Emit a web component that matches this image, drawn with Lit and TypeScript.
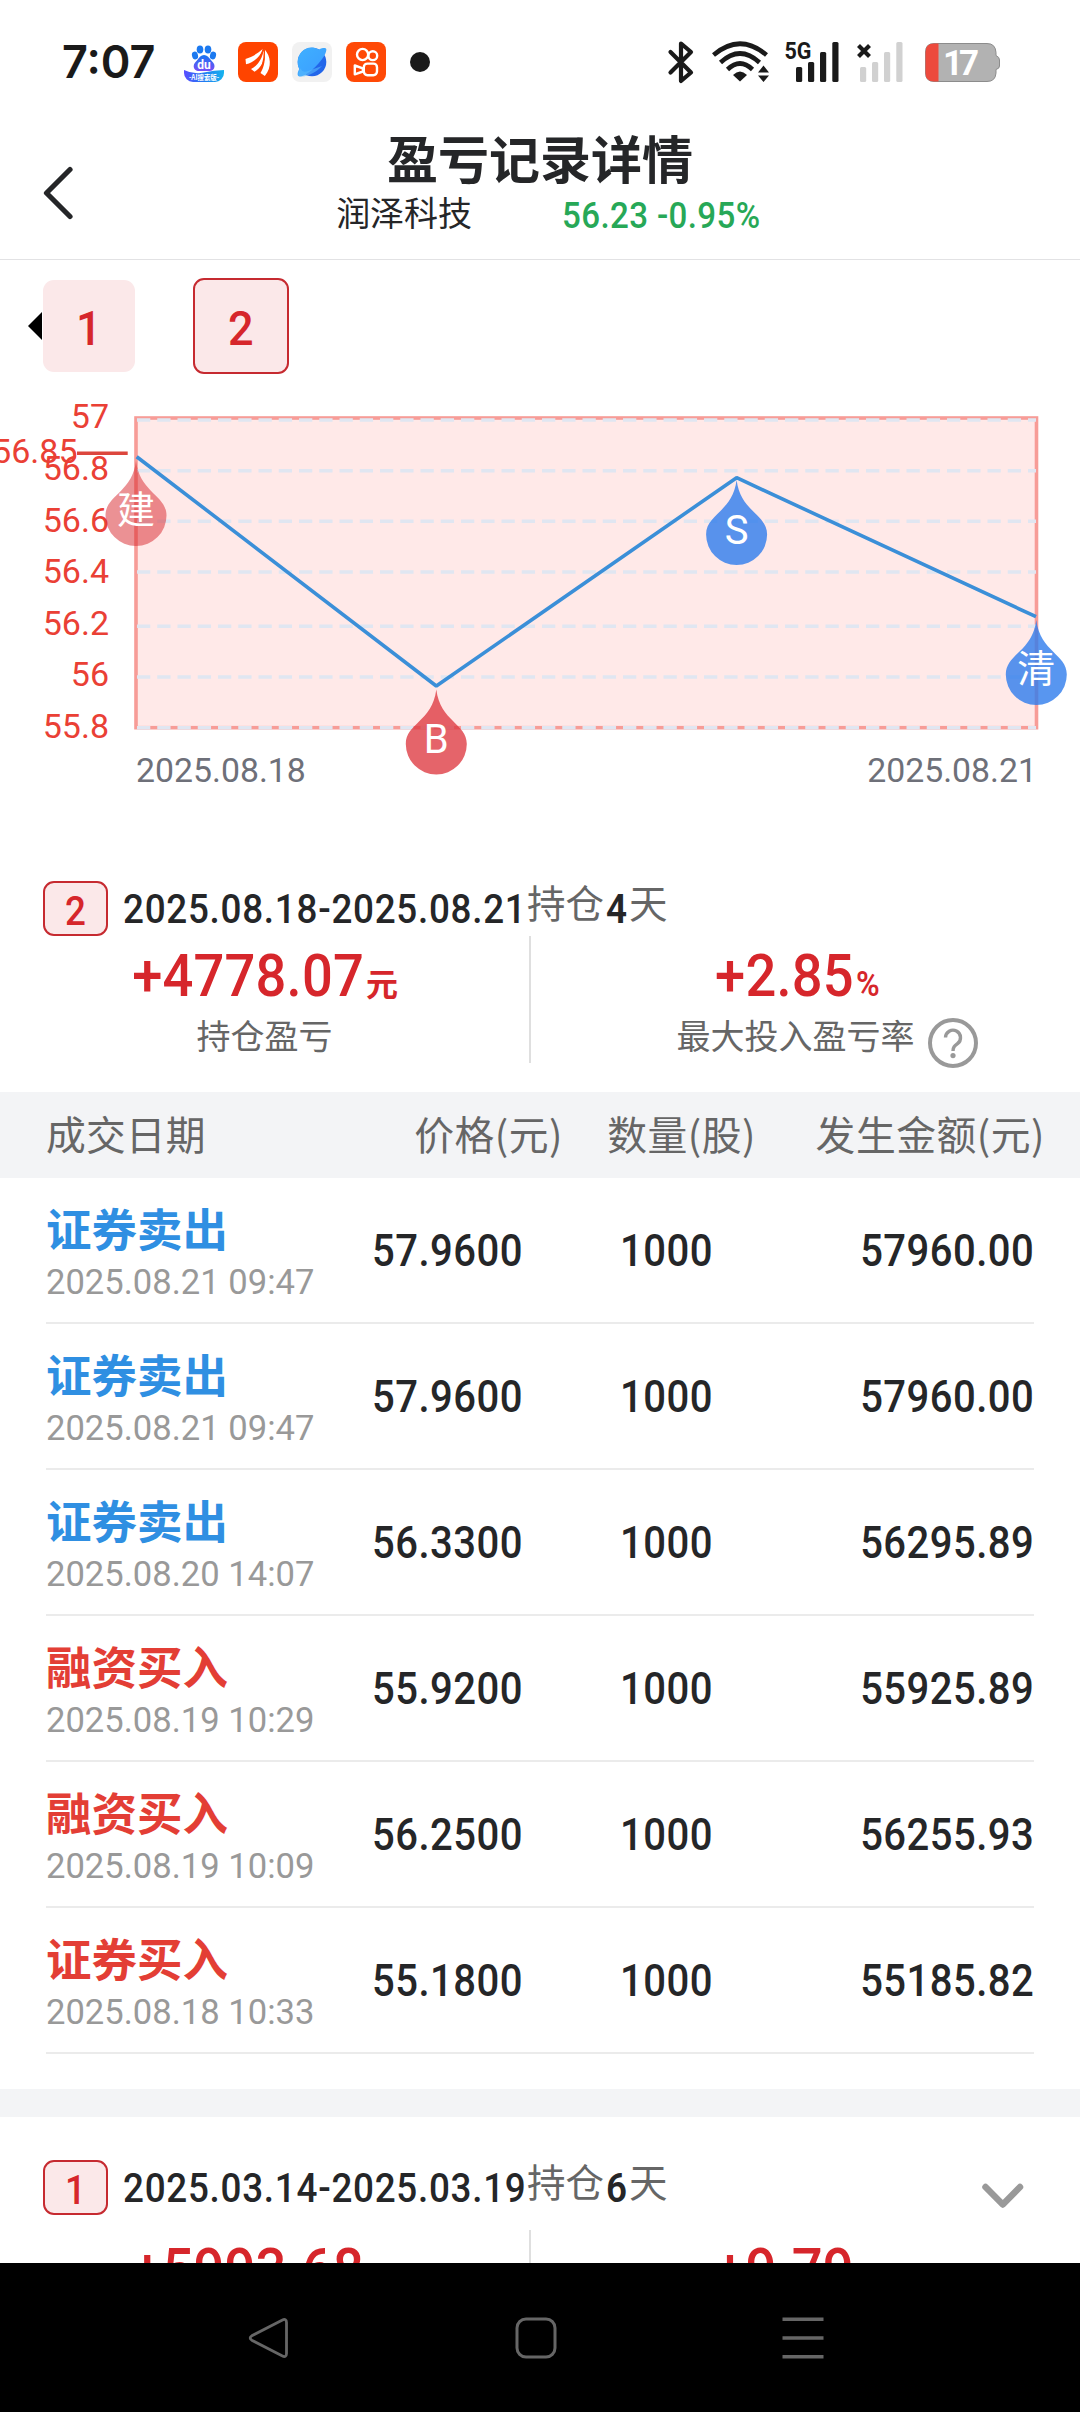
import { LitElement, html, svg, css } from "lit";
import { customElement, property } from "lit/decorators.js";

interface Trade {
  side: "sell" | "buy";
  name: string;
  time: string;
  price: string;
  qty: string;
  amount: string;
}

const TRADES: Trade[] = [
  { side: "sell", name: "证券卖出", time: "2025.08.21 09:47", price: "57.9600", qty: "1000", amount: "57960.00" },
  { side: "sell", name: "证券卖出", time: "2025.08.21 09:47", price: "57.9600", qty: "1000", amount: "57960.00" },
  { side: "sell", name: "证券卖出", time: "2025.08.20 14:07", price: "56.3300", qty: "1000", amount: "56295.89" },
  { side: "buy", name: "融资买入", time: "2025.08.19 10:29", price: "55.9200", qty: "1000", amount: "55925.89" },
  { side: "buy", name: "融资买入", time: "2025.08.19 10:09", price: "56.2500", qty: "1000", amount: "56255.93" },
  { side: "buy", name: "证券买入", time: "2025.08.18 10:33", price: "55.1800", qty: "1000", amount: "55185.82" },
];

const FONT = css`
  :host {
    display: block;
    font-family: Roboto, "Noto Sans CJK SC", sans-serif;
  }
  * {
    box-sizing: border-box;
  }
  svg {
    display: block;
    flex: none;
  }
  .din {
    display: inline-block;
    transform: scaleX(0.92);
    transform-origin: center;
  }
  .din.l {
    transform-origin: left;
  }
  .din.r {
    transform-origin: right;
  }
`;

@customElement("status-bar")
class StatusBar extends LitElement {
  static styles = [
    FONT,
    css`
      .bar {
        height: 124px;
        padding: 0 80px 0 62px;
        display: flex;
        align-items: center;
        justify-content: space-between;
      }
      .group {
        display: flex;
        align-items: center;
      }
      .time {
        width: 122px;
        font: 600 45px/60px Inter, sans-serif;
        color: #1a1a1a;
      }
      .apps {
        display: flex;
        gap: 14px;
      }
      .dot {
        width: 20px;
        height: 20px;
        margin-left: 24px;
        border-radius: 50%;
        background: #1a1a1a;
      }
      .t {
        font-family: Roboto, sans-serif;
        font-weight: 700;
      }
      .cjk {
        font-family: "Noto Sans CJK SC", sans-serif;
        font-weight: 700;
      }
    `,
  ];
  render() {
    return html`<div class="bar">
      <div class="group">
        <div class="time">7:07</div>
        <div class="apps">
          <svg width="40" height="40" viewBox="0 0 40 40">
            <defs>
              <linearGradient id="a" x1="0" y1="0" x2="1" y2="0">
                <stop offset="0" stop-color="#5a4dff" /><stop offset=".5" stop-color="#1f7bf2" /><stop offset="1" stop-color="#16b4ee" />
              </linearGradient>
              <linearGradient id="b" x1="0" y1="0" x2="0" y2="1">
                <stop offset="0" stop-color="#1676f3" /><stop offset="1" stop-color="#7a4df5" />
              </linearGradient>
            </defs>
            <ellipse cx="16" cy="7.500" rx="3.300" ry="4" fill="#1b79f0" />
            <ellipse cx="24" cy="7.500" rx="3.300" ry="4" fill="#1b79f0" />
            <ellipse cx="11" cy="13.500" rx="3" ry="4" fill="#1b79f0" transform="rotate(-15 11 13.500)" />
            <ellipse cx="29" cy="13.500" rx="3" ry="4" fill="#1b79f0" transform="rotate(15 29 13.500)" />
            <path d="M20 13c3 0 5 2.500 6.500 4.500 2 2.300 4 4 4 6.500 0 4-3 5-5.500 5H15c-3 0-5.300-1.500-5.300-5 0-2.500 2-4.200 4-6.500C15.200 15.500 17 13 20 13z" fill="url(#b)" />
            <path d="M0 28q10 5 20 2.500T40 28v3a9 9 0 0 1-9 9H9a9 9 0 0 1-9-9z" fill="url(#a)" />
            <text x="20" y="27" class="t" font-size="12" fill="#fff" text-anchor="middle">du</text>
            <text x="20" y="38.200" class="cjk" font-size="7.200" fill="#fff" text-anchor="middle" textLength="30" lengthAdjust="spacingAndGlyphs">-AI搜索版-</text>
          </svg>
          <svg width="40" height="40" viewBox="0 0 40 40">
            <rect width="40" height="40" rx="8" fill="#ff4400" />
            <g fill="#fff">
              <path d="M7.500 17C14 15 20 11.500 25 6.800 22.500 14 17 20 8 22.300z" />
              <path d="M13 27c6.500-3.200 11.500-10 12.800-20 2 9.500-1.800 18.500-9.300 22.800z" />
              <path d="M22.500 31c4-6.500 5-14 4.200-23.500C32.500 14 34.500 25 26.800 34z" />
            </g>
            <path d="M10.500 24.800C18 21 23.500 14 25.500 7M19.500 31c5-5.500 7.200-14 6.800-23.500" stroke="#ff4400" stroke-width="1.300" fill="none" />
          </svg>
          <svg width="40" height="40" viewBox="0 0 40 40">
            <defs>
              <linearGradient id="c" x1="0" y1="0" x2="1" y2="1">
                <stop offset="0" stop-color="#3fb0ff" /><stop offset="1" stop-color="#3b9cff" />
              </linearGradient>
            </defs>
            <rect width="40" height="40" rx="8" fill="#f1f1f1" />
            <circle cx="20" cy="20" r="14.300" fill="#2266ea" />
            <path d="M27 7.500C16 1.500 5.700 9.500 5.700 20c0 3 .6 5.300 1.500 7-2 4-2.300 7.300.5 7.500 5.500.3 18-10 24.500-20.500C34.500 9.500 35 6.500 33.500 6.200 32 5.800 29.500 6.300 27 7.500z" fill="url(#c)" />
            <path d="M30 24C24.500 30 15 35.500 8 34.300c-2-.7-2-3.500.5-8C10 30 13 30.500 16 29z" fill="#58b9fb" opacity=".6" />
          </svg>
          <svg width="40" height="40" viewBox="0 0 40 40">
            <rect width="40" height="40" rx="8" fill="#ff4906" />
            <g fill="none" stroke="#fff" stroke-width="2.400">
              <circle cx="16.600" cy="12.500" r="5.600" />
              <circle cx="26.800" cy="13.700" r="4.400" />
              <rect x="17.800" y="21.600" width="13.200" height="11.600" rx="3.600" />
              <path d="M8.800 23.500v8.800l8-2.800v-3.200z" stroke-linejoin="round" />
            </g>
          </svg>
        </div>
        <div class="dot"></div>
      </div>
      <svg width="336" height="44" viewBox="664 40 336 44">
        <path d="M670.500 52 691 72.500 681 81V43.500L691 52 670.500 72.500" fill="none" stroke="#1a1a1a" stroke-width="4.200" stroke-linecap="round" stroke-linejoin="round" />
        <g fill="none" stroke="#1a1a1a" stroke-width="4.600">
          <path d="M713.500 55Q740 32.500 766.500 55" />
          <path d="M720.500 62.500Q740 44.500 759.500 62.500" />
          <path d="M727.500 69.500Q740 57.500 752.500 69.500" />
        </g>
        <path d="M740 81.500 733 75Q740 68 747 75z" fill="#1a1a1a" />
        <path d="M763.500 65.500 769 72.500H758zM763.500 82 769 75.500H758z" fill="#1a1a1a" />
        <text x="784.500" y="59" class="t" font-size="24.500" fill="#1a1a1a" textLength="27" lengthAdjust="spacingAndGlyphs">5G</text>
        <g fill="#1a1a1a">
          <rect x="796" y="67" width="6.200" height="15" rx="1.500" />
          <rect x="808" y="62" width="6.200" height="20" rx="1.500" />
          <rect x="820" y="52" width="6.200" height="30" rx="1.500" />
          <rect x="832.300" y="42" width="6.200" height="40" rx="1.500" />
        </g>
        <path d="M858.500 45.500 869.500 56.500M869.500 45.500 858.500 56.500" stroke="#1a1a1a" stroke-width="4.200" />
        <g fill="#d1d1d1">
          <rect x="860" y="67" width="6.200" height="15" rx="1.500" />
          <rect x="872" y="62" width="6.200" height="20" rx="1.500" />
          <rect x="884" y="52" width="6.200" height="30" rx="1.500" />
          <rect x="896.300" y="42" width="6.200" height="40" rx="1.500" />
        </g>
        <path d="M934 43.500H987Q995.500 43.500 996 52.500V55.500Q999.500 57 999.500 60V66Q999.500 68.500 996 69.500V73Q995.500 81.500 987 81.500H934Q925.500 81.500 925.500 73V52Q925.500 43.500 934 43.500z" fill="#b2b2b2" stroke="#8c8c8c" />
        <path d="M938.500 43.500H934Q925.500 43.500 925.500 52V73Q925.500 81.500 934 81.500H938.500z" fill="#ed4a3d" />
        <text x="961" y="75" class="t" font-size="35" fill="#fff" text-anchor="middle" textLength="36">17</text>
      </svg>
    </div>`;
  }
}

@customElement("page-header")
class PageHeader extends LitElement {
  static styles = [
    FONT,
    css`
      .head {
        height: 136px;
        display: grid;
        grid-template-columns: 110px 1fr 110px;
        border-bottom: 1px solid #e2e2e4;
        color: #252628;
      }
      .back {
        padding: 42px 0 0 43px;
      }
      .title {
        margin-top: 12px;
        height: 52px;
        font-size: 51px;
        line-height: 52px;
        font-weight: 700;
        text-align: center;
      }
      .sub {
        display: flex;
        justify-content: center;
        gap: 90px;
        padding-left: 34px;
        font-size: 34px;
        line-height: 52px;
      }
      .quote {
        font-size: 36px;
        line-height: 57px;
        font-weight: 500;
        letter-spacing: 0.4px;
        color: #27a857;
        white-space: pre;
      }
    `,
  ];
  render() {
    return html`<div class="head">
      <div class="back">
        <svg width="32" height="54" viewBox="43 166 32 54">
          <path d="M70 169.500 46.500 193 70 216.500" fill="none" stroke="#252628" stroke-width="5.200" stroke-linecap="round" stroke-linejoin="round" />
        </svg>
      </div>
      <div>
        <div class="title">盈亏记录详情</div>
        <div class="sub"><span>润泽科技</span><span class="quote din l">56.23 -0.95%</span></div>
      </div>
    </div>`;
  }
}

@customElement("period-tabs")
class PeriodTabs extends LitElement {
  static styles = [
    FONT,
    css`
      .tabs {
        height: 132px;
        display: flex;
        align-items: center;
        padding-left: 28px;
      }
      .tab {
        width: 92px;
        height: 92px;
        border-radius: 11px;
        background: #fbe8e9;
        color: #d6262b;
        font-size: 49px;
        line-height: 97px;
        font-weight: 500;
        text-align: center;
      }
      .tab.on {
        width: 96px;
        height: 96px;
        margin-left: 58px;
        border: 2px solid #c62a30;
      }
      .arrow {
        margin-right: 1px;
      }
    `,
  ];
  render() {
    return html`<div class="tabs">
      <svg class="arrow" width="14" height="28" viewBox="0 0 14 28"><path d="M0 14 14 0V28z" fill="#000" /></svg>
      <div class="tab"><span class="din">1</span></div>
      <div class="tab on"><span class="din">2</span></div>
    </div>`;
  }
}

@customElement("price-chart")
class PriceChart extends LitElement {
  static styles = [
    FONT,
    css`
      .y {
        font-size: 34px;
        fill: #ea4035;
        text-anchor: end;
      }
      .x {
        font-size: 33.800px;
        fill: #6e7079;
      }
      .end {
        text-anchor: end;
      }
      .pin {
        font-size: 40px;
        fill: #fff;
        text-anchor: middle;
      }
      .cn {
        font-size: 38px;
      }
    `,
  ];
  private pin(x: number, tip: number, fill: string, label: string, cn = false) {
    const d = `M${x} ${tip}C${x + 4} ${tip + 32} ${x + 30.5} ${tip + 34} ${x + 30.5} ${tip + 54.5}A30.500 30.500 0 0 1 ${x - 30.5} ${tip + 54.5}C${x - 30.5} ${tip + 34} ${x - 4} ${tip + 32} ${x} ${tip}z`;
    return svg`<path d=${d} fill=${fill} />
      <text class=${cn ? "pin cn" : "pin"} x=${x} y=${tip + (cn ? 61.5 : 63.5)}>${label}</text>`;
  }
  render() {
    const labels: [string, number][] = [
      ["57", 428.3], ["56.8", 480], ["56.6", 531.7], ["56.4", 583], ["56.2", 634.7], ["56", 686], ["55.8", 737.7],
    ];
    const grid = [420, 470.7, 521.3, 572, 626.3, 677, 727.7];
    return html`<svg width="1080" height="452" viewBox="0 392 1080 452">
      <rect x="136" y="418" width="900.500" height="309.700" fill="#ffe9e8" stroke="#f79c97" stroke-width="3.600" />
      ${grid.map((y) => svg`<line x1="137" x2="1036" y1=${y} y2=${y} stroke="#e0e6f1" stroke-width="3.500" stroke-dasharray="13.300 6.950" />`)}
      <polyline points="136.700,456.700 436.300,686 736.600,477.700 1036,616.700" fill="none" stroke="#3b8fd8" stroke-width="3.600" stroke-linejoin="bevel" />
      ${labels.map(([t, y]) => svg`<text class="y" x="109" y=${y}>${t}</text>`)}
      <text class="y" x="77.500" y="463">56.85</text>
      <line x1="77" x2="127.700" y1="453.300" y2="453.300" stroke="#dc463d" stroke-width="3.500" />
      ${this.pin(136, 461, "rgba(216,36,41,.5)", "建", true)}
      ${this.pin(436.3, 689.5, "rgba(222,56,64,.78)", "B")}
      ${this.pin(736.6, 480, "rgba(46,124,236,.8)", "S")}
      ${this.pin(1036.3, 620, "rgba(46,124,236,.8)", "清", true)}
      <text class="x" x="136" y="782">2025.08.18</text>
      <text class="x end" x="1037" y="782">2025.08.21</text>
    </svg>`;
  }
}

@customElement("position-summary")
class PositionSummary extends LitElement {
  @property() no = "";
  @property() range = "";
  @property() days = "";
  @property() profit = "";
  @property() rate = "";
  @property({ type: Boolean }) collapsed = false;
  static styles = [
    FONT,
    css`
      .top {
        height: 55px;
        padding: 0 52px 0 43px;
        display: flex;
        align-items: flex-start;
        color: #252628;
      }
      .top.tall {
        height: 70px;
      }
      .badge {
        width: 65px;
        height: 55px;
        margin-right: 15px;
        border: 2px solid #c62a30;
        border-radius: 11px;
        background: #fbe8e9;
        color: #d6262b;
        font-size: 40px;
        line-height: 57px;
        font-weight: 500;
        text-align: center;
      }
      .range {
        width: 404px;
        font-size: 40px;
        line-height: 57px;
        font-weight: 500;
        letter-spacing: 0.8px;
        white-space: nowrap;
      }
      .hold {
        display: flex;
        flex: 1;
        font-size: 38.500px;
        line-height: 48px;
        color: #666;
      }
      .days {
        width: 25px;
        font-size: 40px;
        line-height: 57px;
        font-weight: 600;
        color: #252628;
        text-align: center;
      }
      .chev {
        margin-top: 22px;
      }
      .cols {
        display: grid;
        grid-template-columns: 529px 1fr;
        grid-template-rows: 127px;
      }
      .cols > div + div {
        border-left: 2px solid #dfdfdf;
      }
      .val {
        height: 78px;
        line-height: 80px;
        font-size: 59px;
        font-weight: 500;
        letter-spacing: 0.2px;
        color: #d6262b;
        text-align: center;
        white-space: nowrap;
      }
      .unit {
        margin-left: 2px;
        font-size: 32px;
        font-weight: 700;
      }
      .pct {
        font-size: 35px;
        font-weight: 600;
      }
      .cap {
        display: flex;
        justify-content: center;
        font-size: 34px;
        line-height: 44px;
        margin-top: 1px;
        color: #666;
      }
      .left .val {
        padding-right: 19px;
      }
      .right .val {
        padding-right: 26px;
      }
      .right .cap {
        padding-left: 43px;
      }
      .help {
        margin: 3px 0 0 13px;
      }
    `,
  ];
  render() {
    return html`<div class=${this.collapsed ? "top tall" : "top"}>
        <div class="badge"><span class="din">${this.no}</span></div>
        <div class="range"><span class="din l">${this.range}</span></div>
        <div class="hold"><span>持仓</span><span class="days"><span class="din">${this.days}</span></span><span>天</span></div>
        ${this.collapsed
          ? html`<svg class="chev" width="50" height="28" viewBox="978 2182 50 28">
              <path d="M985.500 2187 1002.800 2204.500 1020 2187" fill="none" stroke="#999" stroke-width="6.500" stroke-linecap="round" stroke-linejoin="round" />
            </svg>`
          : null}
      </div>
      <div class="cols">
        <div class="left">
          <div class="val"><span class="din r">${this.profit}</span><span class="unit">元</span></div>
          <div class="cap">持仓盈亏</div>
        </div>
        <div class="right">
          <div class="val"><span class="din r">${this.rate}</span><span class="unit pct din l">%</span></div>
          <div class="cap">
            <span>最大投入盈亏率</span>
            <svg class="help" width="50" height="50" viewBox="0 0 50 50">
              <circle cx="25" cy="25" r="23" fill="none" stroke="#999" stroke-width="4" />
              <path d="M17.500 19.500a7.500 7.500 0 1 1 12 6.200C26.500 28 25 29.200 25 33" fill="none" stroke="#999" stroke-width="3.400" />
              <circle cx="25" cy="37.600" r="2.600" fill="#999" />
            </svg>
          </div>
        </div>
      </div>`;
  }
}

@customElement("trade-table")
class TradeTable extends LitElement {
  static styles = [
    FONT,
    css`
      .thead {
        height: 86px;
        padding: 0 35px 0 46px;
        display: grid;
        grid-template-columns: 284px 233px 193px 289px;
        background: #f3f4f6;
        color: #666;
        font-size: 39.800px;
        line-height: 82px;
        letter-spacing: 0.1px;
        font-family: "Noto Sans CJK SC", sans-serif;
      }
      .r {
        text-align: right;
        white-space: nowrap;
        letter-spacing: 0.5px;
      }
      .row {
        height: 146px;
        margin: 0 46px;
        border-bottom: 2px solid #ebebeb;
        display: grid;
        grid-template-columns: 284px 193px 190px 321px;
      }
      .name {
        margin-top: 26px;
        height: 54px;
        font-size: 45.500px;
        line-height: 56px;
        font-weight: 700;
      }
      .sell {
        color: #2f8fe2;
      }
      .buy {
        color: #e33e35;
      }
      .time {
        font-size: 34.600px;
        line-height: 48px;
        color: #999;
        white-space: nowrap;
      }
      .num {
        font-size: 43.500px;
        line-height: 147px;
        height: 144px;
        font-weight: 500;
        letter-spacing: 0.4px;
        color: #252628;
        text-align: right;
      }
    `,
  ];
  render() {
    return html`<div class="thead">
        <span>成交日期</span><span class="r">价格(元)</span><span class="r">数量(股)</span><span class="r">发生金额(元)</span>
      </div>
      ${TRADES.map(
        (t) => html`<div class="row">
          <div>
            <div class="name ${t.side}">${t.name}</div>
            <div class="time">${t.time}</div>
          </div>
          <div class="num"><span class="din r">${t.price}</span></div>
          <div class="num"><span class="din r">${t.qty}</span></div>
          <div class="num"><span class="din r">${t.amount}</span></div>
        </div>`
      )}`;
  }
}

@customElement("nav-bar")
class NavBar extends LitElement {
  static styles = [
    FONT,
    css`
      .nav {
        height: 149px;
        padding: 0 256px 0 248px;
        display: flex;
        align-items: center;
        justify-content: space-between;
        background: #000;
      }
    `,
  ];
  render() {
    return html`<div class="nav">
      <svg width="42" height="42" viewBox="0 0 42 42">
        <path d="M34 3.200Q38.500 1 38.500 5.500V36.500Q38.500 41 34 38.800L3.800 23.200Q.6 21 3.800 18.800z" fill="none" stroke="#666" stroke-width="2.800" />
      </svg>
      <svg width="42" height="42" viewBox="0 0 42 42">
        <rect x="2" y="2" width="38" height="38" rx="9" fill="none" stroke="#666" stroke-width="3" />
      </svg>
      <svg width="42" height="42" viewBox="0 0 42 42">
        <path d="M.5 2.300h41M.5 21h41M.5 39.700h41" stroke="#666" stroke-width="3.600" />
      </svg>
    </div>`;
  }
}

@customElement("app-root")
class AppRoot extends LitElement {
  static styles = [
    FONT,
    css`
      .screen {
        width: 1080px;
        height: 2412px;
        display: flex;
        flex-direction: column;
        background: #fff;
        overflow: hidden;
      }
      .page {
        height: 2263px;
        flex: none;
        overflow: hidden;
      }
      .first {
        padding: 37px 0 29px;
      }
      .band {
        height: 28px;
        margin: 35px 0 43px;
        background: #f3f4f6;
      }
    `,
  ];
  render() {
    return html`<div class="screen">
      <div class="page">
        <status-bar></status-bar>
        <page-header></page-header>
        <period-tabs></period-tabs>
        <price-chart></price-chart>
        <div class="first">
          <position-summary no="2" range="2025.08.18-2025.08.21" days="4" profit="+4778.07" rate="+2.85"></position-summary>
        </div>
        <trade-table></trade-table>
        <div class="band"></div>
        <position-summary no="1" range="2025.03.14-2025.03.19" days="6" profit="+5993.68" rate="+9.79" collapsed></position-summary>
      </div>
      <nav-bar></nav-bar>
    </div>`;
  }
}
